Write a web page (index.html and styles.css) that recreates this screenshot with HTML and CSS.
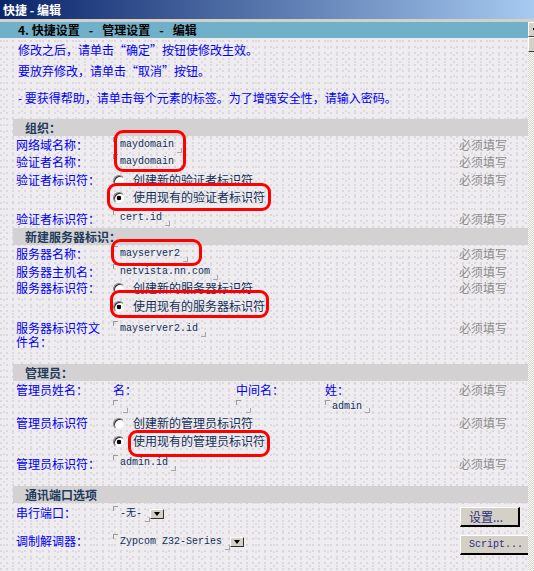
FILE: index.html
```html
<!DOCTYPE html>
<html lang="zh-CN">

<head>
    <meta charset="UTF-8">
    <title>快捷 - 编辑</title>
    <link rel="stylesheet" href="styles.css">
</head>

<body>
    <div class="window">
        <div class="titlebar">快捷 - 编辑</div>
        <div class="frame">
            <div class="page">
                <div class="page-title">4. 快捷设置<span class="sep">-</span>管理设置<span class="sep">-</span>编辑</div>

                <div class="intro">
                    <p class="line-1">修改之后，请单击“确定”按钮使修改生效。</p>
                    <p class="line-2">要放弃修改，请单击“取消”按钮。</p>
                    <p class="line-3">- 要获得帮助，请单击每个元素的标签。为了增强安全性，请输入密码。</p>
                </div>

                <!-- Organisation -->
                <div class="section-head first">组织：</div>
                <table class="form">
                    <tr class="r17">
                        <td class="label">网络域名称：</td>
                        <td class="value"><span class="field">maydomain</span></td>
                        <td class="req">必须填写</td>
                    </tr>
                    <tr class="r18">
                        <td class="label">验证者名称：</td>
                        <td class="value"><span class="field">maydomain</span></td>
                        <td class="req">必须填写</td>
                    </tr>
                    <tr class="r17">
                        <td class="label">验证者标识符：</td>
                        <td class="value option"><span class="radio"></span>创建新的验证者标识符</td>
                        <td class="req">必须填写</td>
                    </tr>
                    <tr class="r18">
                        <td class="label"></td>
                        <td class="value option"><span class="radio checked"></span>使用现有的验证者标识符</td>
                        <td class="req"></td>
                    </tr>
                    <tr class="r22 bottom">
                        <td class="label">验证者标识符：</td>
                        <td class="value"><span class="field">cert.id</span></td>
                        <td class="req">必须填写</td>
                    </tr>
                </table>

                <!-- Server identity -->
                <div class="section-head">新建服务器标识：</div>
                <table class="form">
                    <tr class="r18">
                        <td class="label">服务器名称：</td>
                        <td class="value"><span class="field">mayserver2</span></td>
                        <td class="req">必须填写</td>
                    </tr>
                    <tr class="r17">
                        <td class="label">服务器主机名：</td>
                        <td class="value"><span class="field">netvista.nn.com</span></td>
                        <td class="req">必须填写</td>
                    </tr>
                    <tr class="r16">
                        <td class="label">服务器标识符：</td>
                        <td class="value option"><span class="radio"></span>创建新的服务器标识符</td>
                        <td class="req">必须填写</td>
                    </tr>
                    <tr class="r19">
                        <td class="label"></td>
                        <td class="value option"><span class="radio checked"></span>使用现有的服务器标识符</td>
                        <td class="req"></td>
                    </tr>
                    <tr class="r49 top">
                        <td class="label">服务器标识符文件名：</td>
                        <td class="value"><span class="field">mayserver2.id</span></td>
                        <td class="req">必须填写</td>
                    </tr>
                </table>

                <!-- Administrator -->
                <div class="section-head">管理员：</div>
                <table class="form">
                    <tr class="r17">
                        <td class="label">管理员姓名：</td>
                        <td class="value">
                            <div class="names sub">
                                <span>名：</span>
                                <span>中间名：</span>
                                <span>姓：</span>
                            </div>
                        </td>
                        <td class="req">必须填写</td>
                    </tr>
                    <tr class="r13">
                        <td class="label"></td>
                        <td class="value">
                            <div class="names">
                                <span><span class="field small"></span></span>
                                <span><span class="field small"></span></span>
                                <span><span class="field small">admin</span></span>
                            </div>
                        </td>
                        <td class="req"></td>
                    </tr>
                    <tr class="r19">
                        <td class="label">管理员标识符</td>
                        <td class="value option"><span class="radio"></span>创建新的管理员标识符</td>
                        <td class="req">必须填写</td>
                    </tr>
                    <tr class="r18">
                        <td class="label"></td>
                        <td class="value option"><span class="radio checked"></span>使用现有的管理员标识符</td>
                        <td class="req"></td>
                    </tr>
                    <tr class="r23 bottom">
                        <td class="label">管理员标识符：</td>
                        <td class="value"><span class="field">admin.id</span></td>
                        <td class="req">必须填写</td>
                    </tr>
                </table>

                <!-- Ports -->
                <div class="section-head ports-head">通讯端口选项</div>
                <table class="form ports">
                    <tr class="port-1">
                        <td class="label">串行端口：</td>
                        <td class="value"><span class="field">-无-</span><span class="drop"></span></td>
                        <td class="req"><button class="btn">设置...</button></td>
                    </tr>
                    <tr class="port-2">
                        <td class="label">调制解调器：</td>
                        <td class="value"><span class="field">Zypcom Z32-Series</span><span class="drop"></span></td>
                        <td class="req"><button class="btn btn-wide">Script...</button></td>
                    </tr>
                </table>
            </div>

            <div class="scrollbar">
                <div class="sb-btn"><span class="sb-arrow"></span></div>
                <div class="sb-thumb"></div>
                <div class="sb-track"></div>
            </div>
        </div>

        <!-- red highlight marks drawn over the screenshot -->
        <div class="mark mark-1"></div>
        <div class="mark mark-2"></div>
        <div class="mark mark-3"></div>
        <div class="mark mark-4"></div>
        <div class="mark mark-5"></div>
    </div>
</body>

</html>
```

FILE: styles.css
```css
* {
    box-sizing: border-box;
}
body {
    margin: 0;
    font-family: "Noto Sans CJK SC", "Noto Sans", sans-serif;
    font-size: 12px;
    background-color: #d4d0c8;
}
.window {
    position: relative;
    width: 534px;
    height: 571px;
    overflow: hidden;
}
.titlebar {
    height: 22px;
    line-height: 19px;
    padding-left: 3px;
    color: #fff;
    font-weight: bold;
    background: linear-gradient(to right, #0a246a, #a6caf0) top / 100% 19px no-repeat;
    border-bottom: 3px solid #d4d0c8;
    white-space: pre;
}
.frame {
    display: flex;
    height: 549px;
}
.page {
    width: 528px;
    flex: none;
    overflow: hidden;
    background-color: #eeecee;
    background-image:
        radial-gradient(circle at 1px 1px, #d0ced6 0.6px, transparent 0.9px),
        radial-gradient(circle at 1px 1px, #d4d2da 0.6px, transparent 0.9px);
    background-size: 6px 6px, 9px 7px;
    background-position: 0 0, 3px 4px;
}
.page-title {
    height: 16px;
    line-height: 16px;
    padding-left: 18px;
    font-weight: bold;
    color: #000;
    background-color: #70b0c8;
}
.page-title .sep {
    margin: 0 9px;
}

/* intro text */
.intro p {
    margin: 0;
    padding-left: 18px;
    line-height: 17px;
    color: #0000f0;
}
.intro .line-1 {
    margin-top: 3px;
}
.intro .line-2 {
    margin-top: 4px;
}
.intro .line-3 {
    margin-top: 10px;
}

/* sections */
.section-head {
    margin-left: 13px;
    height: 17px;
    line-height: 17px;
    padding-left: 12px;
    font-weight: bold;
    color: #1e3a5c;
    background-color: #d3d1d1;
}
.section-head.first,
.section-head.ports-head {
    margin-top: 13px;
}
.form {
    margin-left: 13px;
    width: 515px;
    border-collapse: collapse;
    table-layout: fixed;
}
.form td {
    padding: 0;
    line-height: 14px;
    vertical-align: middle;
}
.form td.label {
    width: 100px;
    padding: 0 8px 0 3px;
    color: #0000f0;
}
.form td.value {
    width: 346px;
    color: #123057;
}
.form td.req {
    color: #8c8c8c;
}
.r13 { height: 13px; }
.r16 { height: 16px; }
.r17 { height: 17px; }
.r18 { height: 18px; }
.r19 { height: 19px; }
.r22 { height: 22px; }
.r23 { height: 23px; }
.r49 { height: 49px; }
.form tr.bottom td {
    vertical-align: bottom;
    padding-bottom: 2px;
}
.form tr.top td {
    vertical-align: top;
    padding-top: 6px;
}
.form tr.top td.value {
    padding-top: 5px;
}

/* read-only field with corner marks */
.field {
    display: inline-block;
    height: 16px;
    line-height: 16px;
    padding: 0 8px 0 7px;
    font-family: "Liberation Mono", monospace;
    font-size: 10px;
    color: #10305a;
    vertical-align: middle;
    background:
        linear-gradient(#9a9a9a, #9a9a9a) left top / 5px 1px no-repeat,
        linear-gradient(#9a9a9a, #9a9a9a) left top / 1px 5px no-repeat,
        linear-gradient(#a6a6a6, #a6a6a6) right bottom / 5px 1px no-repeat,
        linear-gradient(#a6a6a6, #a6a6a6) right bottom / 1px 5px no-repeat;
}
.field.small {
    height: 13px;
    line-height: 13px;
}
.names {
    display: flex;
}
.names > span:nth-child(1) {
    width: 123px;
}
.names > span:nth-child(2) {
    width: 89px;
}
.names.sub {
    color: #0000f0;
}

/* radio buttons */
.option {
    white-space: nowrap;
}
.radio {
    display: inline-block;
    width: 12px;
    height: 12px;
    margin-right: 8px;
    vertical-align: -2px;
    border-radius: 50%;
    border: 1px solid;
    border-color: #808080 #e8e8e8 #e8e8e8 #808080;
    box-shadow: inset 1px 1px 0 #303030;
    background-color: #fff;
}
.radio.checked {
    background: radial-gradient(circle, #000 2px, #fff 2.6px);
}

/* combo box arrow */
.drop {
    display: inline-flex;
    align-items: center;
    justify-content: center;
    width: 14px;
    height: 10px;
    vertical-align: middle;
    background-color: #d4d0c8;
    border: 1px solid;
    border-color: #fff #303030 #303030 #fff;
}
.drop::after {
    content: "";
    border-top: 4px solid #000;
    border-left: 3px solid transparent;
    border-right: 3px solid transparent;
}

/* port rows */
.ports td {
    vertical-align: top !important;
}
.port-1 td.label { padding-top: 3px; }
.port-1 td.value { padding-top: 2px; }
.port-1 td.req { padding-top: 4px; }
.port-2 td.label { padding-top: 7px; }
.port-2 td.value { padding-top: 6px; }
.port-2 td.req { padding-top: 8px; }

.btn {
    display: block;
    width: 60px;
    height: 20px;
    margin-left: 1px;
    padding: 0 0 0 8px;
    text-align: left;
    font-family: "Noto Sans CJK SC", sans-serif;
    font-size: 12px;
    line-height: 16px;
    color: #2b2d7c;
    background-color: #d4d0c8;
    border-style: solid;
    border-width: 1px 2px 2px 1px;
    border-color: #fff #000 #000 #fff;
}
.btn-wide {
    width: 72px;
    font-family: "Liberation Mono", monospace;
    font-size: 10px;
}

/* scrollbar strip on the right */
.scrollbar {
    flex: 1;
    display: flex;
    flex-direction: column;
}
.sb-btn,
.sb-thumb {
    height: 15px;
    background-color: #d4d0c8;
    border-top: 1px solid #fff;
    border-left: 1px solid #fff;
    border-bottom: 1px solid #404040;
}
.sb-arrow {
    display: block;
    width: 2px;
    height: 2px;
    margin: 5px 0 0 4px;
    background-color: #000;
}
.sb-track {
    flex: 1;
    background-image: repeating-conic-gradient(#d4d0c8 0 25%, #fff 0 50%);
    background-size: 2px 2px;
}

/* red highlight marks */
.mark {
    position: absolute;
    border: 3px solid #f00;
    border-radius: 9px;
}
.mark-1 { left: 114px; top: 130px; width: 72px; height: 42px; }
.mark-2 { left: 107px; top: 183px; width: 164px; height: 28px; }
.mark-3 { left: 111px; top: 239px; width: 91px; height: 27px; }
.mark-4 { left: 110px; top: 290px; width: 159px; height: 28px; }
.mark-5 { left: 128px; top: 430px; width: 142px; height: 27px; }
```
